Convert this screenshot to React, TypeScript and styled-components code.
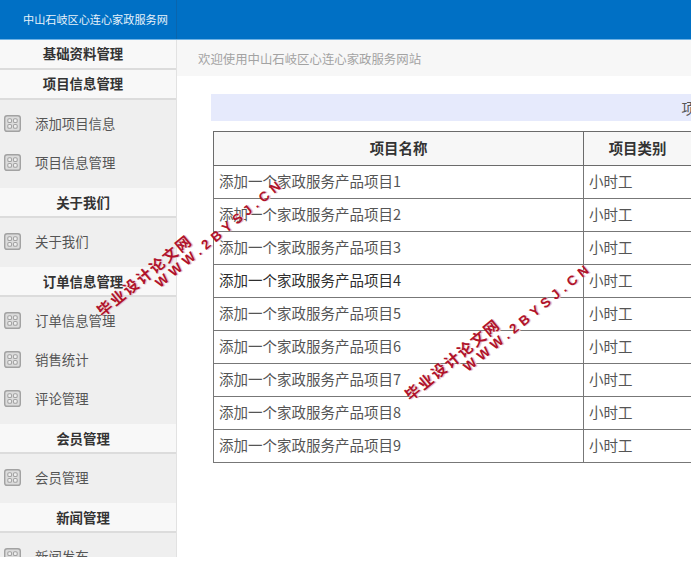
import React from "react";
import styled, { createGlobalStyle } from "styled-components";

const Global = createGlobalStyle`
  html, body { margin: 0; padding: 0; background: #fff; }
  body { font-family: "Noto Sans CJK SC", "Liberation Sans", sans-serif; }
`;

const Page = styled.div`
  position: relative;
  width: 691px;
  height: 557px;
  overflow: hidden;
  background: #fff;
  display: flex;
  flex-direction: column;
`;

const Header = styled.header`
  flex: none;
  display: flex;
  background: #0070c5;
  border-bottom: 1px solid #6fb2e4;
  height: 39px;
`;

const Brand = styled.div`
  width: 177px;
  box-sizing: border-box;
  padding-left: 23px;
  line-height: 39px;
  font-size: 11.15px;
  color: #e8f2fa;
  border-right: 1px solid #0a65ad;
  white-space: nowrap;
`;

const Body = styled.div`
  flex: 1;
  display: flex;
  min-height: 0;
`;

const Side = styled.nav`
  width: 177px;
  flex: none;
  box-sizing: border-box;
  border-right: 1px solid #e2e2e2;
  overflow: hidden;
`;

const GroupHead = styled.div<{ $top?: boolean }>`
  height: 30px;
  box-sizing: border-box;
  border-bottom: 2px solid #dcdcdc;
  background: #f8f8f8;
  padding-right: 10px;
  text-align: center;
  line-height: ${(p) => (p.$top ? 26 : 28)}px;
  font-size: 13.4px;
  font-weight: 700;
  color: #333;
`;

const Panel = styled.div`
  padding: 5px 0;
  background: #efefef;
`;

const Item = styled.div`
  height: 39px;
  box-sizing: border-box;
  display: flex;
  align-items: center;
  gap: 14px;
  padding: 0 0 2px 4px;
  font-size: 13.4px;
  color: #555;
`;

const ItemLabel = styled.span`
  padding-bottom: 2px;
`;

const Main = styled.main`
  flex: 1;
  min-width: 0;
`;

const Welcome = styled.div`
  height: 36px;
  background: #f7f7f7;
  padding-left: 21px;
  line-height: 38px;
  font-size: 12.4px;
  color: #a3a3a3;
`;

const Content = styled.div`
  padding: 18px 0 0 34px;
`;

const Notice = styled.div`
  height: 27px;
  width: 1028px;
  background: #e6eafc;
  text-align: center;
  line-height: 27px;
  font-size: 14.5px;
  color: #555;
  margin-bottom: 10px;
  white-space: nowrap;
`;

const Table = styled.table`
  margin-left: 2px;
  width: 478px;
  border-collapse: collapse;
  table-layout: fixed;
  border: 1px solid #6b6b6b;
`;

const Th = styled.th<{ $w: number }>`
  width: ${(p) => p.$w}px;
  height: 34px;
  padding: 0 0 2px;
  box-sizing: border-box;
  background: #f7f7f7;
  border: 1px solid #6b6b6b;
  font-size: 14.4px;
  font-weight: 700;
  color: #333;
  text-align: center;
`;

const Td = styled.td<{ $dark?: boolean }>`
  padding: 0 0 3px 5px;
  border: 1px solid #777;
  font-size: 14.5px;
  line-height: 29px;
  color: ${(p) => (p.$dark ? "#2e2e2e" : "#555")};
  white-space: nowrap;
`;

const Stamp = styled.div<{ $x: number; $y: number }>`
  position: absolute;
  left: ${(p) => p.$x}px;
  top: ${(p) => p.$y}px;
  width: 240px;
  transform: rotate(-39.5deg);
  transform-origin: 0 0;
  color: #b0122a;
  font-weight: 700;
  white-space: nowrap;
  text-shadow: 1px 1px 0 #e9c9cc;
  pointer-events: none;
`;

const StampCn = styled.div`
  font-size: 15px;
  line-height: 17px;
  letter-spacing: 1.9px;
`;

const StampEn = styled.div`
  font-family: "Liberation Sans", sans-serif;
  font-size: 13.5px;
  line-height: 16px;
  letter-spacing: 4.6px;
  margin: 0 0 0 63px;
`;

const GridIcon = () => (
  <svg width="17" height="17" viewBox="0 0 18 18" aria-hidden="true">
    <rect x="0.75" y="0.75" width="16.5" height="16.5" rx="2.5" fill="#dcdcdc" stroke="#a2a2a2" strokeWidth="1.5" />
    <g fill="#efefef" stroke="#a2a2a2" strokeWidth="1.1">
      <rect x="4" y="4" width="4" height="4" rx="1.4" />
      <rect x="10" y="4" width="4" height="4" rx="1.4" />
      <rect x="4" y="10" width="4" height="4" rx="1.4" />
      <rect x="10" y="10" width="4" height="4" rx="1.4" />
    </g>
  </svg>
);

const groups: { title: string; items: string[] }[] = [
  { title: "基础资料管理", items: [] },
  { title: "项目信息管理", items: ["添加项目信息", "项目信息管理"] },
  { title: "关于我们", items: ["关于我们"] },
  { title: "订单信息管理", items: ["订单信息管理", "销售统计", "评论管理"] },
  { title: "会员管理", items: ["会员管理"] },
  { title: "新闻管理", items: ["新闻发布"] },
];

const rows = [1, 2, 3, 4, 5, 6, 7, 8, 9];

export default function App() {
  return (
    <Page>
      <Global />
      <Header>
        <Brand>中山石岐区心连心家政服务网</Brand>
      </Header>
      <Body>
        <Side>
          {groups.map((g, i) => (
            <React.Fragment key={g.title}>
              <GroupHead $top={i < 2}>{g.title}</GroupHead>
              {g.items.length > 0 && (
                <Panel>
                  {g.items.map((it) => (
                    <Item key={it}>
                      <GridIcon />
                      <ItemLabel>{it}</ItemLabel>
                    </Item>
                  ))}
                </Panel>
              )}
            </React.Fragment>
          ))}
        </Side>
        <Main>
          <Welcome>欢迎使用中山石岐区心连心家政服务网站</Welcome>
          <Content>
            <Notice>项目信息列表</Notice>
            <Table>
              <thead>
                <tr>
                  <Th $w={370}>项目名称</Th>
                  <Th $w={108}>项目类别</Th>
                </tr>
              </thead>
              <tbody>
                {rows.map((n) => (
                  <tr key={n}>
                    <Td $dark={n === 4}>添加一个家政服务产品项目{n}</Td>
                    <Td>小时工</Td>
                  </tr>
                ))}
              </tbody>
            </Table>
          </Content>
        </Main>
      </Body>
      <Stamp $x={93} $y={306}>
        <StampCn>毕业设计论文网</StampCn>
        <StampEn>WWW.2BYSJ.CN</StampEn>
      </Stamp>
      <Stamp $x={401} $y={390}>
        <StampCn>毕业设计论文网</StampCn>
        <StampEn>WWW.2BYSJ.CN</StampEn>
      </Stamp>
    </Page>
  );
}
